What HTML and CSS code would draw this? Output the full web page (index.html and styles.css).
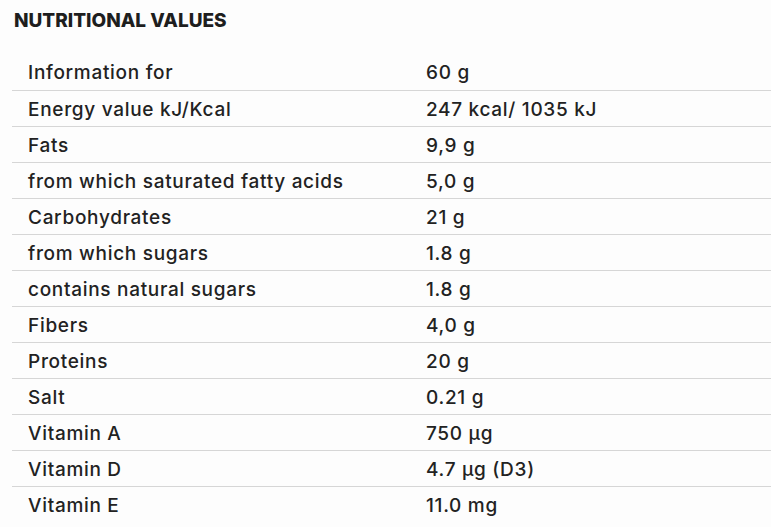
FILE: index.html
```html
<!DOCTYPE html>
<html>
<head>
<meta charset="utf-8">
<link rel="stylesheet" href="styles.css">
</head>
<body>
<section class="nutrition">
  <h2 class="title">NUTRITIONAL VALUES</h2>
  <table class="table">
    <tbody>
      <tr><td class="name">Information for</td><td class="value">60 g</td></tr>
      <tr><td class="name">Energy value kJ/Kcal</td><td class="value">247 kcal/ 1035 kJ</td></tr>
      <tr><td class="name">Fats</td><td class="value">9,9 g</td></tr>
      <tr><td class="name">from which saturated fatty acids</td><td class="value">5,0 g</td></tr>
      <tr><td class="name">Carbohydrates</td><td class="value">21 g</td></tr>
      <tr><td class="name">from which sugars</td><td class="value">1.8 g</td></tr>
      <tr><td class="name">contains natural sugars</td><td class="value">1.8 g</td></tr>
      <tr><td class="name">Fibers</td><td class="value">4,0 g</td></tr>
      <tr><td class="name">Proteins</td><td class="value">20 g</td></tr>
      <tr><td class="name">Salt</td><td class="value">0.21 g</td></tr>
      <tr><td class="name">Vitamin A</td><td class="value">750 µg</td></tr>
      <tr><td class="name">Vitamin D</td><td class="value">4.7 µg (D3)</td></tr>
      <tr><td class="name">Vitamin E</td><td class="value">11.0 mg</td></tr>
    </tbody>
  </table>
</section>
</body>
</html>
```
FILE: styles.css
```css
html, body {
  margin: 0;
  padding: 0;
  background: #fdfdfd;
}
body {
  font-family: Inter, "Noto Sans", sans-serif;
  color: #222;
}
.nutrition {
  padding: 10px 0 0 12px;
}
.title {
  margin: 0 0 0 2px;
  font-size: 19px;
  font-weight: 800;
  letter-spacing: 0;
  line-height: 22px;
  color: #1e1e1e;
}
.table {
  margin-top: 22px;
  width: 100%;
  border-collapse: collapse;
}
.table td {
  height: 36px;
  box-sizing: border-box;
  padding: 2px 0 0 16px;
  font-size: 19px;
  font-weight: 500;
  letter-spacing: 0.7px;
  border-bottom: 1px solid #d6d6d6;
  vertical-align: middle;
}
.table tr:last-child td {
  border-bottom: none;
}
.name {
  width: 398px;
}
.value {
  letter-spacing: 0.4px;
}
```
